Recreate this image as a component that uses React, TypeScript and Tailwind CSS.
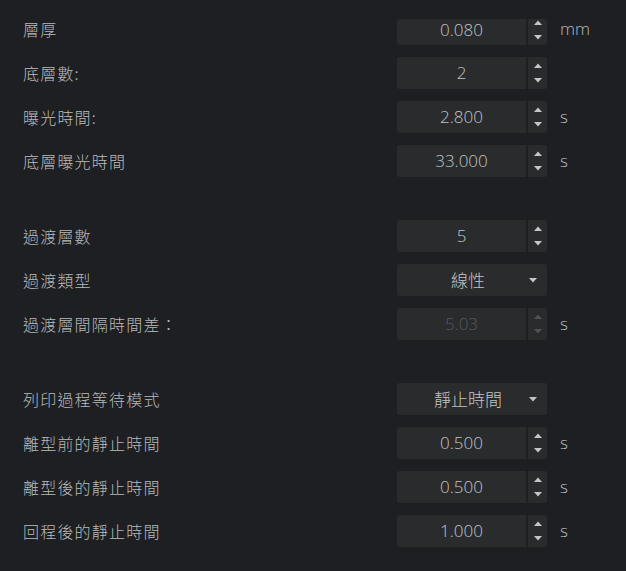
import React from 'react';

type Row =
  | { kind: 'spin'; label: string; value: string; unit?: string; disabled?: boolean; clipTop?: boolean }
  | { kind: 'select'; label: string; value: string };

const sections: Row[][] = [
  [
    { kind: 'spin', label: '層厚', value: '0.080', unit: 'mm', clipTop: true },
    { kind: 'spin', label: '底層數:', value: '2' },
    { kind: 'spin', label: '曝光時間:', value: '2.800', unit: 's' },
    { kind: 'spin', label: '底層曝光時間', value: '33.000', unit: 's' },
  ],
  [
    { kind: 'spin', label: '過渡層數', value: '5' },
    { kind: 'select', label: '過渡類型', value: '線性' },
    { kind: 'spin', label: '過渡層間隔時間差：', value: '5.03', unit: 's', disabled: true },
  ],
  [
    { kind: 'select', label: '列印過程等待模式', value: '靜止時間' },
    { kind: 'spin', label: '離型前的靜止時間', value: '0.500', unit: 's' },
    { kind: 'spin', label: '離型後的靜止時間', value: '0.500', unit: 's' },
    { kind: 'spin', label: '回程後的靜止時間', value: '1.000', unit: 's' },
  ],
];

const cjk = "font-['Noto_Sans_CJK_TC','Noto_Sans_CJK_SC',sans-serif]";
const num = "font-['Open_Sans','Noto_Sans_CJK_TC',sans-serif]";

function Tri({ up, dim }: { up?: boolean; dim?: boolean }) {
  return (
    <svg width="8" height="5" viewBox="0 0 8 5" className="block">
      <path d={up ? 'M0 5 L4 0.5 L8 5 Z' : 'M0 0 L4 4.5 L8 0 Z'} fill={dim ? '#505255' : '#c4c5c6'} />
    </svg>
  );
}

function SpinBox({ value, disabled, short }: { value: string; disabled?: boolean; short?: boolean }) {
  return (
    <div className={`flex w-[150px] gap-[2px] ${short ? 'mt-[6px] h-[26px]' : 'h-8'}`}>
      <div
        className={`flex flex-1 items-center justify-center rounded-l-[3px] bg-[#2a2b2d] text-[17px] font-light ${num} ${
          disabled ? 'text-[#56585b]' : 'text-[#c2c3c4]'
        } ${short ? 'pb-[4px]' : ''}`}
      >
        {value}
      </div>
      <div
        className={`flex w-[19px] flex-col items-center justify-between rounded-r-[3px] bg-[#2a2b2d] ${
          short ? 'pb-[5px] pt-[1px]' : 'py-[6px]'
        }`}
      >
        <Tri up dim={disabled} />
        <Tri dim={disabled} />
      </div>
    </div>
  );
}

function Select({ value }: { value: string }) {
  return (
    <div className="relative flex h-8 w-[150px] items-center justify-center rounded-[3px] bg-[#2a2b2d]">
      <span className={`pr-[8px] text-[17px] font-light text-[#c2c3c4] ${cjk}`}>{value}</span>
      <div className="absolute right-[10px] top-[14px]">
        <svg width="8" height="5" viewBox="0 0 8 5" className="block">
          <path d="M0 0 L4 4.5 L8 0 Z" fill="#c4c5c6" />
        </svg>
      </div>
    </div>
  );
}

export default function App() {
  return (
    <div className="h-[571px] w-[626px] overflow-hidden bg-[#1e1f22] pl-[23px] pt-[13px]">
      <div className="flex flex-col gap-[43px]">
        {sections.map((rows, si) => (
          <div key={si} className="flex flex-col gap-3">
            {rows.map((r, i) => (
              <div key={i} className="flex h-8 items-center">
                <div className={`w-[374px] text-[16px] font-light tracking-[1.2px] text-[#b9babb] ${cjk}`}>{r.label}</div>
                {r.kind === 'select' ? (
                  <Select value={r.value} />
                ) : (
                  <SpinBox value={r.value} disabled={r.disabled} short={r.clipTop} />
                )}
                {r.kind === 'spin' && r.unit ? (
                  <div className={`ml-[13px] text-[17px] font-light text-[#b9babb] ${num}`}>{r.unit}</div>
                ) : null}
              </div>
            ))}
          </div>
        ))}
      </div>
    </div>
  );
}
